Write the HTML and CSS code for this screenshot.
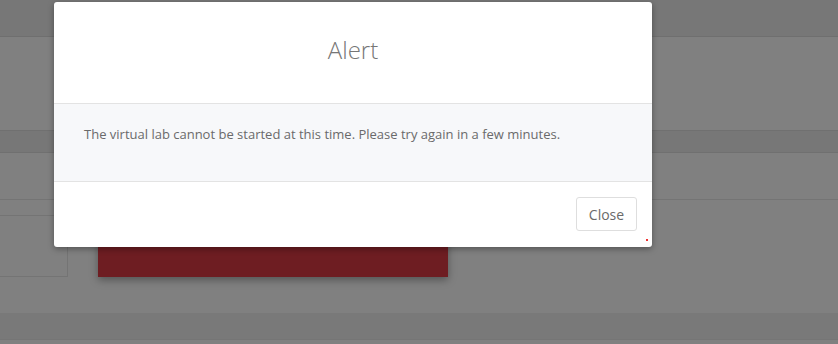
FILE: index.html
```html
<!DOCTYPE html>
<html>
<head>
<meta charset="utf-8">
<link rel="stylesheet" href="styles.css">
</head>
<body>
<div class="page">
  <div class="topbar"></div>
  <div class="hero"></div>
  <div class="subbar"></div>
  <div class="content">
    <div class="rule"></div>
    <div class="row">
      <div class="sidebox"></div>
      <div class="launch"></div>
    </div>
  </div>
  <div class="footerbar"></div>
</div>
<div class="modal">
  <div class="modal-header"><h4 class="modal-title">Alert</h4></div>
  <div class="modal-body">The virtual lab cannot be started at this time. Please try again in a few minutes.</div>
  <div class="modal-footer"><button class="btn">Close</button><span class="dot"></span></div>
</div>
</body>
</html>
```
FILE: styles.css
```css
html, body { margin: 0; padding: 0; }
body {
  width: 838px; height: 344px; overflow: hidden;
  background: #808080;
  font-family: "Open Sans", "Liberation Sans", sans-serif;
  position: relative;
}
.page { display: flex; flex-direction: column; }
.topbar { height: 36px; background: #777777; border-bottom: 1px solid #6f6f6f; }
.hero { height: 93px; background: #808080; }
.subbar { height: 21px; background: #777777; border-top: 1px solid #707070; border-bottom: 1px solid #707070; }
.content { height: 160px; display: flex; flex-direction: column; }
.rule { margin-top: 46px; height: 1px; background: #747474; }
.row { display: flex; margin-top: 15px; align-items: flex-start; }
.sidebox { width: 68px; height: 62px; box-sizing: border-box; border-top: 1px solid #747474; border-right: 1px solid #747474; border-bottom: 1px solid #747474; }
.launch { margin-left: 30px; width: 350px; height: 62px; background: #6e1d22; box-shadow: 0 3px 8px rgba(0,0,0,0.35); }
.footerbar { height: 26px; background: #797979; border-bottom: 1px solid #757575; }

.modal {
  position: absolute; left: 54px; top: 2px; width: 598px; height: 245px;
  background: #fff; border-radius: 3px;
  box-shadow: 0 2px 6px rgba(0,0,0,0.35);
  display: flex; flex-direction: column; overflow: hidden;
}
.modal-header { height: 101px; border-bottom: 1px solid #e3e3e3; display: flex; align-items: center; justify-content: center; }
.modal-title { margin: 0 0 6px; font-size: 24px; font-weight: 300; color: #767676; line-height: 1; }
.modal-body {
  height: 78px; box-sizing: border-box; background: #f7f8fa; border-bottom: 1px solid #e3e3e3;
  padding: 21px 30px 0; font-size: 13px; color: #6a6a6a; line-height: 18px;
}
.modal-footer { flex: 1; display: flex; justify-content: flex-end; align-items: flex-start; padding: 15px 15px 0 0; position: relative; }
.btn {
  width: 61px; height: 34px; background: #fff; border: 1px solid #dedede; border-radius: 3px;
  font-family: inherit; font-size: 14px; color: #6a6a6a; padding: 0;
}
.dot { position: absolute; right: 4px; bottom: 6px; width: 2px; height: 2px; background: #e33; }
```
